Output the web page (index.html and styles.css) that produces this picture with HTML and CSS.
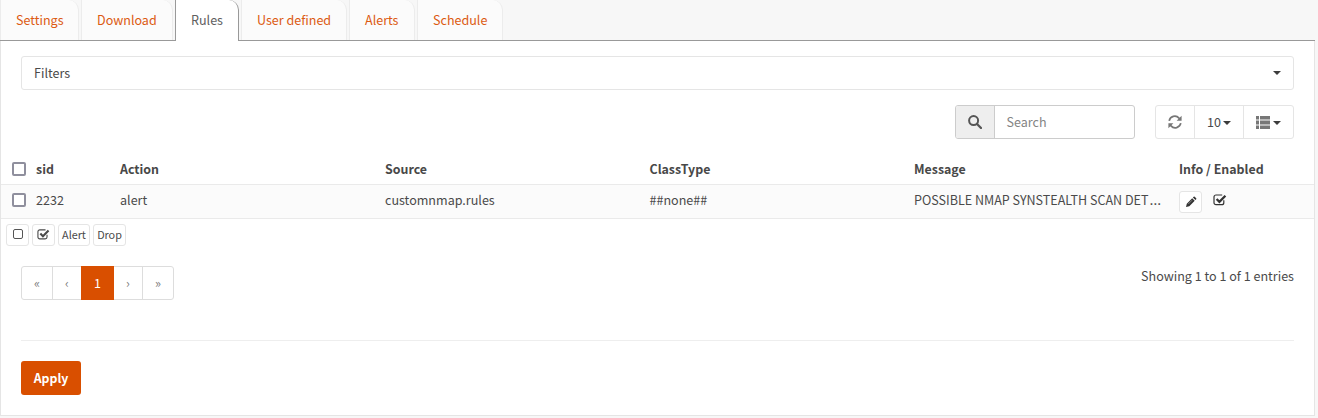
FILE: index.html
```html
<!DOCTYPE html>
<html lang="en">
<head>
<meta charset="utf-8">
<title>Rules</title>
<link rel="stylesheet" href="styles.css">
</head>
<body>
<svg class="defs" width="0" height="0">
  <symbol id="checked" viewBox="0 0 14 14"><path d="M10.8 7.2v2.5a2 2 0 0 1-2 2H3a2 2 0 0 1-2-2V4a2 2 0 0 1 2-2h6.2" fill="none" stroke="currentColor" stroke-width="1.2"/><path d="M3.6 6l2.8 2.8 6-6" fill="none" stroke="currentColor" stroke-width="2.3"/></symbol>
</svg>
<nav class="tabs">
  <a class="tab tab-settings">Settings</a>
  <a class="tab tab-download">Download</a>
  <a class="tab tab-rules active">Rules</a>
  <a class="tab tab-user">User defined</a>
  <a class="tab tab-alerts">Alerts</a>
  <a class="tab tab-schedule">Schedule</a>
</nav>
<main class="panel">
  <div class="filters"><span>Filters</span><i class="caret"></i></div>
  <div class="toolbar">
    <div class="search">
      <span class="addon"><svg width="14" height="14" viewBox="0 0 14 14"><circle cx="5.6" cy="5.6" r="4.5" fill="none" stroke="currentColor" stroke-width="2"/><path d="M9 9l4 4" stroke="currentColor" stroke-width="2.3" stroke-linecap="round"/></svg></span>
      <span class="field">Search</span>
    </div>
    <div class="group">
      <span class="tool refresh"><svg width="14" height="14" viewBox="0 0 14 14"><path d="M1.2 5.8A5.7 5.7 0 0 1 11 3.1l1 1M12.8 8.2A5.7 5.7 0 0 1 3 10.9l-1-1" fill="none" stroke="currentColor" stroke-width="1.7"/><path d="M13.6.7v5H8.6zM.4 13.3v-5h5z" fill="currentColor"/></svg></span>
      <span class="tool count">10<i class="caret"></i></span>
      <span class="tool columns"><svg width="14" height="13" viewBox="0 0 14 13"><path d="M0 0h3v3H0zM4 0h10v3H4zM0 5h3v3H0zM4 5h10v3H4zM0 10h3v3H0zM4 10h10v3H4zM0 3.6h3v.8H0zM4 3.6h10v.8H4zM0 8.6h3v.8H0zM4 8.6h10v.8H4z" fill="currentColor"/></svg><i class="caret"></i></span>
    </div>
  </div>
  <div class="table">
    <div class="row head"><i class="box"></i><span>sid</span><span>Action</span><span>Source</span><span>ClassType</span><span>Message</span><span>Info / Enabled</span></div>
    <div class="row data"><i class="box"></i><span>2232</span><span>alert</span><span>customnmap.rules</span><span>##none##</span><span class="message">POSSIBLE NMAP SYNSTEALTH SCAN DET<span class="dots">…</span></span>
      <span class="info"><span class="mini edit"><svg width="12" height="12" viewBox="0 0 12 12"><path d="M1 11l.8-3.3L7.2 2.3l2.5 2.5-5.4 5.4zM7.9 1.6l.8-.8q.5-.4 1 0l1.5 1.5q.4.5 0 1l-.8.8z" fill="currentColor"/><path d="M3.2 8.1l4-4" stroke="#fff" stroke-width=".4"/></svg></span><svg class="enabled" width="14" height="14"><use href="#checked"/></svg></span></div>
  </div>
  <div class="actions">
    <span class="mini uncheck"><i class="square"></i></span>
    <span class="mini check"><svg width="13" height="13"><use href="#checked"/></svg></span>
    <span class="mini alert">Alert</span>
    <span class="mini drop">Drop</span>
  </div>
  <div class="footer">
    <div class="pages"><span class="page first">«</span><span class="page prev">‹</span><span class="page current">1</span><span class="page next">›</span><span class="page last">»</span></div>
    <span class="summary">Showing 1 to 1 of 1 entries</span>
  </div>
  <hr class="rule">
  <button class="apply">Apply</button>
</main>
</body>
</html>
```
FILE: styles.css
```css
* { box-sizing: border-box; }
body { margin: 0; height: 418px; overflow: hidden; background: #f7f7f7; color: #4a4a4a; font: 12.55px/20px "Noto Sans CJK SC", "Open Sans", sans-serif; }
.defs { display: block; }
svg { display: block; flex: none; }
.tabs { display: flex; gap: 2px; width: 1315px; height: 41px; border-bottom: 1px solid #999; }
.tab { padding: 10px 0 0 15px; background: #fbfbfb; color: #dc5a12; border: 1px solid #ececec; border-width: 0 1px; border-top-right-radius: 10px; background-clip: padding-box; height: 40px; white-space: nowrap; }
.tab-settings { width: 79px; }
.tab-download { width: 92px; }
.tab-rules { width: 64px; }
.tab-user { width: 106px; }
.tab-alerts { width: 66px; }
.tab-schedule { width: 86px; }
.tab.active { height: 41px; background: #fff; color: #606060; border-color: #999; }
.panel { width: 1315px; height: 375px; padding-top: 15px; background: #fff; border: 1px solid #e5e5e5; border-top: 0; }
.filters { display: flex; align-items: center; justify-content: space-between; margin: 0 20px; height: 34px; padding: 0 12px; border: 1px solid #e5e5e5; border-radius: 3px; }
.caret { width: 0; height: 0; border: 4px solid transparent; border-top-color: #3c3c3c; border-bottom: 0; }
.toolbar { display: flex; justify-content: flex-end; gap: 20px; margin: 15px 20px 0; height: 34px; }
.search { display: flex; width: 180px; border: 1px solid #ccc; border-radius: 3px; overflow: hidden; }
.addon { width: 39px; display: flex; align-items: center; justify-content: center; background: #eee; border-right: 1px solid #ccc; color: #555; }
.field { padding: 6px 11.5px; color: #848484; }
.group { display: flex; width: 139px; border: 1px solid #e5e5e5; border-radius: 3px; }
.tool { display: flex; align-items: center; justify-content: center; border-left: 1px solid #e5e5e5; }
.refresh { width: 38px; border: 0; color: #777; }
.count { width: 49px; gap: 2px; }
.columns { width: 50px; gap: 3px; color: #777; }
.count .caret, .columns .caret { margin-top: 2px; }
.table { margin-top: 15px; }
.row { display: grid; grid-template-columns: 24px 84px 265px 264.5px 264.5px 265px 1fr; padding-left: 11px; align-items: center; }
.head { height: 30px; font-weight: 700; font-size: 12.4px; color: #484848; }
.data { height: 35px; background: #fbfbfb; border: 1px solid #eaeaea; border-width: 1px 0; padding-bottom: 3px; }
.data > span { height: 20px; }
.box { width: 14px; height: 14px; border: 2px solid #8f8f9d; border-radius: 2px; background: #fff; }
.message { white-space: nowrap; }
.dots { font-family: "Open Sans", sans-serif; font-size: 15px; line-height: 1; margin-left: 1px; }
.info { display: flex; gap: 11px; }
.mini { display: flex; align-items: center; justify-content: center; height: 22px; background: #fff; border: 1px solid #e5e5e5; border-radius: 3px; font-size: 10.8px; line-height: 18px; }
.edit { width: 23px; margin-top: 1px; color: #333; }
.enabled { margin-top: 3px; color: #333; }
.actions { display: flex; gap: 3px; margin: 5px 0 0 5px; }
.actions .mini { padding-bottom: 2px; }
.uncheck { width: 23px; }
.check { width: 23px; }
.alert { width: 32px; }
.drop { width: 33px; }
.square { width: 10px; height: 10px; border: 1px solid #555; border-radius: 2px; }
.footer { display: flex; justify-content: space-between; margin: 20px 20px 0; height: 34px; }
.pages { display: flex; width: 153px; border: 1px solid #ddd; border-radius: 3px; }
.page { display: flex; align-items: center; justify-content: center; color: #777; }
.first { width: 31px; border-right: 1px solid #ddd; }
.prev { width: 28px; }
.current { width: 33px; margin: -1px 0; background: #d94f00; color: #fff; }
.next { width: 29px; border-right: 1px solid #ddd; }
.last { width: 30px; }
.summary { white-space: nowrap; }
.rule { margin: 40px 20px 20px; border: 0; height: 1px; background: #eee; }
.apply { display: block; width: 60px; height: 34px; margin-left: 20px; padding: 0; border: 0; border-radius: 3px; background: #d94f00; color: #fff; font: 700 12.3px/20px "Noto Sans CJK SC", "Open Sans", sans-serif; }
```
